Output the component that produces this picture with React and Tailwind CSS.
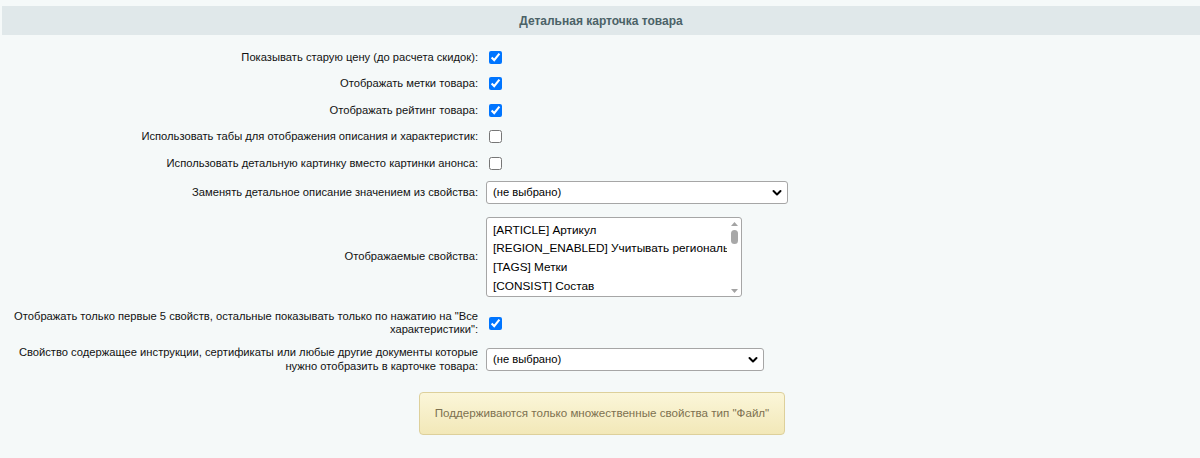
import React from 'react';

const Check = ({ checked }) => (
  <input type="checkbox" defaultChecked={checked} className="w-[13px] h-[13px] m-0 ml-[9px]" />
);

const Chevron = () => (
  <svg width="10" height="7" viewBox="0 0 10 7" className="absolute right-[6px] top-1/2 -translate-y-1/2 pointer-events-none">
    <path d="M1.5 1.5 L5 5 L8.5 1.5" fill="none" stroke="#000" strokeWidth="2" strokeLinecap="round" strokeLinejoin="round" />
  </svg>
);

const Select = ({ width }) => (
  <div className={`relative ml-[6px] ${width}`}>
    <select className="appearance-none w-full h-[23px] bg-white border border-[#a6a6a6] rounded-[3px] pl-[6px] text-[11.2px] text-black outline-none">
      <option>(не выбрано)</option>
    </select>
    <Chevron />
  </div>
);

const Row = ({ label, h, children }) => (
  <div className={`flex items-center ${h}`}>
    <div className="w-[480px] shrink-0 text-right pr-[2px] leading-[13.5px]">{label}</div>
    {children}
  </div>
);

const props = [
  '[ARTICLE] Артикул',
  '[REGION_ENABLED] Учитывать региональность',
  '[TAGS] Метки',
  '[CONSIST] Состав',
];

export default function App() {
  return (
    <div className="min-h-[458px] bg-[#f5f9f9] pt-[6px] text-[11.2px] text-[#111]" style={{ fontFamily: '"Liberation Sans", Arial, sans-serif' }}>
      <div className="ml-[2px] h-[29px] bg-[#e0e8ea] flex items-center justify-center font-bold text-[12px] text-[#4b6267]">
        Детальная карточка товара
      </div>

      <div className="pt-[9px]">
        <Row label="Показывать старую цену (до расчета скидок):" h="h-[26.5px]"><Check checked /></Row>
        <Row label="Отображать метки товара:" h="h-[26.5px]"><Check checked /></Row>
        <Row label="Отображать рейтинг товара:" h="h-[26.5px]"><Check checked /></Row>
        <Row label="Использовать табы для отображения описания и характеристик:" h="h-[26.5px]"><Check /></Row>
        <Row label="Использовать детальную картинку вместо картинки анонса:" h="h-[26.5px]"><Check /></Row>
        <Row label="Заменять детальное описание значением из свойства:" h="h-[32px]">
          <Select width="w-[302px]" />
        </Row>
        <Row label="Отображаемые свойства:" h="h-[96px]">
          <div className="ml-[6px] w-[256px] h-[80px] bg-white border border-[#a6a6a6] rounded-[3px] flex overflow-hidden">
            <div className="flex-1 min-w-0 pl-[6px] pt-[3px] text-[11.8px] text-black">
              {props.map(p => (
                <div key={p} className="whitespace-nowrap overflow-hidden h-[18.7px] leading-[18.7px]">{p}</div>
              ))}
            </div>
            <div className="w-[14px] shrink-0 flex flex-col items-center pt-[4px] pb-[3px]">
              <svg width="7" height="4" viewBox="0 0 7 4"><path d="M0 4 L3.5 0 L7 4 Z" fill="#a3a3a3" /></svg>
              <div className="w-[7px] h-[14px] mt-[4px] rounded-full bg-[#a8a8a8]" />
              <div className="flex-1" />
              <svg width="7" height="4" viewBox="0 0 7 4"><path d="M0 0 L3.5 4 L7 0 Z" fill="#a3a3a3" /></svg>
            </div>
          </div>
        </Row>
        <Row label={<>Отображать только первые 5 свойств, остальные показывать только по нажатию на "Все<br />характеристики":</>} h="h-[37px]">
          <Check checked />
        </Row>
        <Row label={<>Свойство содержащее инструкции, сертификаты или любые другие документы которые<br />нужно отобразить в карточке товара:</>} h="h-[36px]">
          <Select width="w-[278px]" />
        </Row>
      </div>

      <div className="flex pl-[419px] pt-[14px]">
        <div className="w-[366px] h-[43px] rounded-[4px] border border-[#ddd09b] bg-gradient-to-b from-[#fbf6d9] to-[#f2e8b8] flex items-center justify-center text-[11.6px] text-[#7d7150]">
          Поддерживаются только множественные свойства тип "Файл"
        </div>
      </div>
    </div>
  );
}
